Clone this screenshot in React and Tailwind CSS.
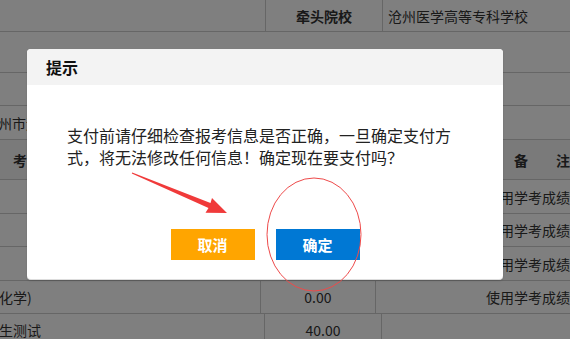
import React from "react";

const Row = ({ h, children, className = "" }) => (
  <div className={`flex border-b border-[#cccccc] ${h} ${className}`}>{children}</div>
);

export default function App() {
  return (
    <div className="relative w-[570px] h-[339px] overflow-hidden bg-white text-[14px] text-[#333] font-['Noto_Sans_CJK_SC',sans-serif] leading-[20px]">
      {/* underlying table */}
      <div className="flex flex-col">
        <Row h="h-[32px]">
          <div className="w-[266px] border-r border-[#cccccc]" />
          <div className="w-[117px] border-r border-[#cccccc] flex items-center justify-center font-bold">牵头院校</div>
          <div className="flex-1 flex items-center pl-[5px] whitespace-nowrap">沧州医学高等专科学校</div>
        </Row>
        <Row h="h-[41px]" />
        <Row h="h-[33px]" />
        <Row h="h-[34px]">
          <div className="flex items-center -ml-[2px] whitespace-nowrap">州市运河区</div>
        </Row>
        <Row h="h-[40px]" className="bg-[#f4f4f4] font-bold">
          <div className="w-[266px] flex items-center pl-[13px]">考试科目</div>
          <div className="w-[117px]" />
          <div className="flex-1 flex items-center pl-[137px] gap-[28px]">
            <span>备</span>
            <span>注</span>
          </div>
        </Row>
        {["h-[34px]", "h-[33px]", "h-[34px]"].map((h, i) => (
          <Row key={i} h={h}>
            <div className="w-[266px] border-r border-[#cccccc]" />
            <div className="w-[117px] border-r border-[#cccccc]" />
            <div className="flex-1 flex items-center pl-[110px] whitespace-nowrap">使用学考成绩</div>
          </Row>
        ))}
        <Row h="h-[33px]">
          <div className="w-[266px] border-r border-[#cccccc] flex items-center -ml-[1px] whitespace-nowrap">化学)</div>
          <div className="w-[117px] border-r border-[#cccccc] flex items-center justify-center">0.00</div>
          <div className="flex-1 flex items-center pl-[110px] whitespace-nowrap">使用学考成绩</div>
        </Row>
        <Row h="h-[40px]">
          <div className="w-[266px] border-r border-[#cccccc] flex items-start pt-[6px] -ml-[1px] whitespace-nowrap">生测试</div>
          <div className="w-[117px] border-r border-[#cccccc] flex items-start pt-[6px] justify-center">40.00</div>
          <div className="flex-1" />
        </Row>
      </div>

      {/* overlay */}
      <div className="absolute inset-0 bg-black/50" />

      {/* dialog */}
      <div className="absolute left-[27px] top-[49px] w-[476px] h-[231px] bg-white rounded-[4px] overflow-hidden flex flex-col shadow-[0_1px_2px_rgba(0,0,0,0.15)] border-b border-[#dddddd]">
        <div className="h-[36px] bg-[#f3f3f3] flex items-center pl-[19px] text-[16px] font-bold text-[#111]">提示</div>
        <div className="pt-[39px] px-[40px] text-[16px] leading-[22px] text-[#222]">
          支付前请仔细检查报考信息是否正确，一旦确定支付方式，将无法修改任何信息！确定现在要支付吗？
        </div>
        <div className="mt-[61px] flex justify-center gap-[21px]">
          <button className="w-[84px] h-[31px] bg-[#ffa500] text-white font-bold text-[15px] flex items-center justify-center">取消</button>
          <button className="w-[84px] h-[31px] bg-[#0078d4] text-white font-bold text-[15px] flex items-center justify-center">确定</button>
        </div>
      </div>

      {/* annotations */}
      <svg className="absolute inset-0 pointer-events-none" width="570" height="339" viewBox="0 0 570 339">
        <polygon
          points="132.2,172.4 210.5,203.1 212,198 227,213 205.5,212.7 208.5,207.9 131.8,173.6"
          fill="#f03a3a"
        />
        <ellipse cx="314" cy="234.5" rx="47" ry="56.5" fill="none" stroke="#ee4a4a" strokeWidth="1" />
      </svg>
    </div>
  );
}
